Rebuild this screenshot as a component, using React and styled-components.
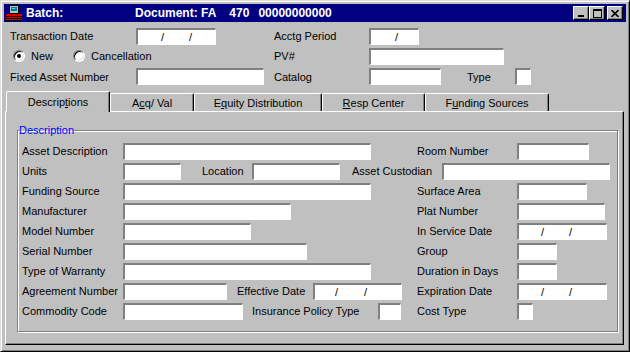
import React from 'react';
import styled, { createGlobalStyle } from 'styled-components';

const GlobalStyle = createGlobalStyle`
    html, body {
        margin: 0;
        padding: 0;
        background: #c0c0c0;
    }
    body {
        font-family: "Liberation Sans", Arial, sans-serif;
        font-size: 11px;
        color: #000;
    }
`;

const Window = styled.div`
    width: 630px;
    height: 352px;
    box-sizing: border-box;
    background: #c0c0c0;
    border: 1px solid;
    border-color: #dfdfdf #000 #000 #dfdfdf;
    box-shadow: inset 1px 1px 0 #fff, inset -1px -1px 0 #808080;
    padding: 3px;
    display: flex;
    flex-direction: column;
`;

const TitleBar = styled.div`
    height: 18px;
    flex: none;
    background: #000080;
    color: #fff;
    display: flex;
    align-items: center;
    padding: 0 3px 0 2px;
    font-weight: bold;
    font-size: 12px;
    white-space: pre;
`;

const TitleText = styled.span`
    width: ${(p) => p.w || 'auto'}px;
    margin-left: ${(p) => p.ml || 0}px;
`;

const TitleButtons = styled.div`
    margin-left: auto;
    display: flex;
`;

const TitleButton = styled.div`
    width: 16px;
    height: 14px;
    box-sizing: border-box;
    background: #c0c0c0;
    border: 1px solid;
    border-color: #fff #000 #000 #fff;
    box-shadow: inset -1px -1px 0 #808080;
    margin-left: ${(p) => p.ml || 0}px;
    display: flex;
    align-items: center;
    justify-content: center;
`;

const Header = styled.div`
    padding: 4px 0 0 6px;
`;

const HeaderRow = styled.div`
    display: grid;
    grid-template-columns: 126px 138px 95px 1fr;
    align-items: center;
    height: ${(p) => p.h || 20}px;
`;

const Label = styled.span`
    white-space: nowrap;
    box-sizing: border-box;
    width: ${(p) => (p.w ? `${p.w}px` : 'auto')};
    padding-left: ${(p) => p.pad || 0}px;
    flex: none;
`;

const Field = styled.div`
    width: ${(p) => p.w}px;
    height: 17px;
    box-sizing: border-box;
    background: #fff;
    border-top: 2px solid #808080;
    border-left: 2px solid #808080;
    border-right: 1px solid #fff;
    border-bottom: 1px solid #fff;
    flex: none;
    display: flex;
    align-items: center;
    padding-left: ${(p) => p.pad || 0}px;
    font-size: 11px;
`;

const Slash = styled.span`
    width: ${(p) => p.w || 28}px;
    flex: none;
`;

const Inline = styled.div`
    display: flex;
    align-items: center;
`;

const RadioGroup = styled.div`
    grid-column: 1 / span 2;
    display: flex;
    align-items: center;
    gap: 20px;
    padding-left: 3px;
`;

const RadioOption = styled.label`
    display: flex;
    align-items: center;
    gap: 6px;
`;

const RadioCircle = styled.span`
    width: 12px;
    height: 12px;
    box-sizing: border-box;
    border-radius: 50%;
    background: #fff;
    border: 1px solid;
    border-color: #808080 #fff #fff #808080;
    box-shadow: inset 1px 1px 0 #000, inset -1px -1px 0 #dfdfdf;
    display: flex;
    align-items: center;
    justify-content: center;

    &::after {
        content: '';
        width: 4px;
        height: 4px;
        border-radius: 50%;
        background: ${(p) => (p.checked ? '#000' : 'transparent')};
    }
`;

const TabArea = styled.div`
    flex: 1;
    display: flex;
    flex-direction: column;
    margin: 4px 2px 3px 1px;
`;

const TabStrip = styled.div`
    height: 20px;
    display: flex;
    align-items: flex-end;
    padding-left: 1px;
`;

const Tab = styled.div`
    position: relative;
    z-index: ${(p) => (p.active ? 1 : 0)};
    width: ${(p) => p.w}px;
    height: ${(p) => (p.active ? 21 : 18)}px;
    margin-bottom: ${(p) => (p.active ? -1 : 0)}px;
    box-sizing: border-box;
    background: #c0c0c0;
    border-top: 1px solid #fff;
    border-left: 1px solid #fff;
    border-right: 1px solid #000;
    border-top-left-radius: 2px;
    border-top-right-radius: 2px;
    box-shadow: inset -1px 0 0 #808080;
    display: flex;
    align-items: center;
    justify-content: center;
    padding-bottom: ${(p) => (p.active ? 1 : 0)}px;
    white-space: nowrap;
`;

const Panel = styled.div`
    flex: 1;
    box-sizing: border-box;
    border-top: 1px solid #fff;
    border-left: 1px solid #fff;
    border-right: 1px solid #000;
    border-bottom: 1px solid #000;
    box-shadow: inset -1px -1px 0 #808080;
    padding: 12px 5px 12px 11px;
    display: flex;
`;

const GroupBox = styled.fieldset`
    flex: 1;
    margin: 0;
    min-width: 0;
    padding: 4px 0 0 4px;
    border: 1px solid #808080;
    box-shadow: 1px 1px 0 #fff, inset 1px 1px 0 #fff;
`;

const Legend = styled.legend`
    color: #0000ff;
    padding: 0;
    margin-left: -3px;
    line-height: 13px;
    font-size: 11px;
`;

const FormRow = styled.div`
    display: flex;
    align-items: center;
    height: 20px;
`;

const LeftCell = styled.div`
    width: 395px;
    flex: none;
    display: flex;
    align-items: center;
`;

const TitleIcon = () => (
    <svg width="16" height="16" viewBox="0 0 16 16" shapeRendering="crispEdges" style={{ marginRight: 4 }}>
        <rect x="3.5" y="0.5" width="9" height="8" fill="#c0c0c0" stroke="#000" />
        <rect x="5" y="2" width="6" height="4" fill="#008080" />
        <rect x="6" y="3" width="3" height="1" fill="#00ffff" />
        <rect x="0" y="9" width="16" height="7" fill="#e00000" />
        <rect x="0" y="11" width="16" height="1" fill="#000" />
        <rect x="0" y="13" width="16" height="1" fill="#000" />
        <rect x="0" y="15" width="16" height="1" fill="#000" />
        <rect x="5" y="9" width="1" height="7" fill="#000" />
        <rect x="11" y="9" width="1" height="7" fill="#000" />
    </svg>
);

const MinGlyph = () => (
    <svg width="8" height="8" viewBox="0 0 8 8" shapeRendering="crispEdges">
        <rect x="1" y="6" width="6" height="2" fill="#000" />
    </svg>
);

const MaxGlyph = () => (
    <svg width="9" height="9" viewBox="0 0 9 9" shapeRendering="crispEdges">
        <rect x="0.5" y="0.5" width="8" height="8" fill="none" stroke="#000" />
        <rect x="0" y="1" width="9" height="1" fill="#000" />
    </svg>
);

const CloseGlyph = () => (
    <svg width="8" height="7" viewBox="0 0 8 7">
        <path d="M0.5 0 L7.5 7 M7.5 0 L0.5 7" stroke="#000" strokeWidth="1.6" />
    </svg>
);

const DateField = ({ w, first = 24, gap = 28 }) => (
    <Field w={w} pad={first}>
        <Slash w={gap}>/</Slash>
        <span>/</span>
    </Field>
);

const tabs = [
    { key: 'desc', w: 104, label: <>Descrip<u>t</u>ions</> },
    { key: 'acq', w: 84, label: <>A<u>c</u>q/ Val</> },
    { key: 'equity', w: 128, label: <>E<u>q</u>uity Distribution</> },
    { key: 'resp', w: 103, label: <><u>R</u>esp Center</> },
    { key: 'fund', w: 124, label: <>F<u>u</u>nding Sources</> },
];

export default function App() {
    return (
        <>
            <GlobalStyle />
            <Window>
                <TitleBar>
                    <TitleIcon />
                    <TitleText w={109}>Batch:</TitleText>
                    <TitleText>Document: FA</TitleText>
                    <TitleText ml={13}>470</TitleText>
                    <TitleText ml={9}>00000000000</TitleText>
                    <TitleButtons>
                        <TitleButton><MinGlyph /></TitleButton>
                        <TitleButton><MaxGlyph /></TitleButton>
                        <TitleButton ml={2}><CloseGlyph /></TitleButton>
                    </TitleButtons>
                </TitleBar>

                <Header>
                    <HeaderRow>
                        <Label>Transaction Date</Label>
                        <DateField w={80} first={23} gap={28} />
                        <Label>Acctg Period</Label>
                        <Field w={50} pad={24}>/</Field>
                    </HeaderRow>
                    <HeaderRow>
                        <RadioGroup>
                            <RadioOption><RadioCircle checked />New</RadioOption>
                            <RadioOption><RadioCircle />Cancellation</RadioOption>
                        </RadioGroup>
                        <Label>PV#</Label>
                        <Field w={135} />
                    </HeaderRow>
                    <HeaderRow h={21}>
                        <Label>Fixed Asset Number</Label>
                        <Field w={128} />
                        <Label>Catalog</Label>
                        <Inline>
                            <Field w={72} />
                            <Label w={74} pad={26}>Type</Label>
                            <Field w={16} />
                        </Inline>
                    </HeaderRow>
                </Header>

                <TabArea>
                    <TabStrip>
                        {tabs.map((t, i) => (
                            <Tab key={t.key} w={t.w} active={i === 0}>{t.label}</Tab>
                        ))}
                    </TabStrip>
                    <Panel>
                        <GroupBox>
                            <Legend>Description</Legend>
                            <FormRow>
                                <LeftCell>
                                    <Label w={101}>Asset Description</Label>
                                    <Field w={248} />
                                </LeftCell>
                                <Label w={100}>Room Number</Label>
                                <Field w={72} />
                            </FormRow>
                            <FormRow>
                                <Label w={101}>Units</Label>
                                <Field w={58} />
                                <Label w={71} pad={21}>Location</Label>
                                <Field w={88} />
                                <Label w={102} pad={12}>Asset Custodian</Label>
                                <Field w={168} />
                            </FormRow>
                            <FormRow>
                                <LeftCell>
                                    <Label w={101}>Funding Source</Label>
                                    <Field w={248} />
                                </LeftCell>
                                <Label w={100}>Surface Area</Label>
                                <Field w={70} />
                            </FormRow>
                            <FormRow>
                                <LeftCell>
                                    <Label w={101}>Manufacturer</Label>
                                    <Field w={168} />
                                </LeftCell>
                                <Label w={100}>Plat Number</Label>
                                <Field w={88} />
                            </FormRow>
                            <FormRow>
                                <LeftCell>
                                    <Label w={101}>Model Number</Label>
                                    <Field w={128} />
                                </LeftCell>
                                <Label w={100}>In Service Date</Label>
                                <DateField w={90} first={22} gap={28} />
                            </FormRow>
                            <FormRow>
                                <LeftCell>
                                    <Label w={101}>Serial Number</Label>
                                    <Field w={184} />
                                </LeftCell>
                                <Label w={100}>Group</Label>
                                <Field w={40} />
                            </FormRow>
                            <FormRow>
                                <LeftCell>
                                    <Label w={101}>Type of Warranty</Label>
                                    <Field w={248} />
                                </LeftCell>
                                <Label w={100}>Duration in Days</Label>
                                <Field w={40} />
                            </FormRow>
                            <FormRow>
                                <LeftCell>
                                    <Label w={101}>Agreement Number</Label>
                                    <Field w={104} />
                                    <Label w={86} pad={10}>Effective Date</Label>
                                    <DateField w={89} first={20} gap={29} />
                                </LeftCell>
                                <Label w={100}>Expiration Date</Label>
                                <DateField w={90} first={22} gap={28} />
                            </FormRow>
                            <FormRow>
                                <LeftCell>
                                    <Label w={101}>Commodity Code</Label>
                                    <Field w={120} />
                                    <Label w={135} pad={9}>Insurance Policy Type</Label>
                                    <Field w={23} />
                                </LeftCell>
                                <Label w={100}>Cost Type</Label>
                                <Field w={16} />
                            </FormRow>
                        </GroupBox>
                    </Panel>
                </TabArea>
            </Window>
        </>
    );
}
